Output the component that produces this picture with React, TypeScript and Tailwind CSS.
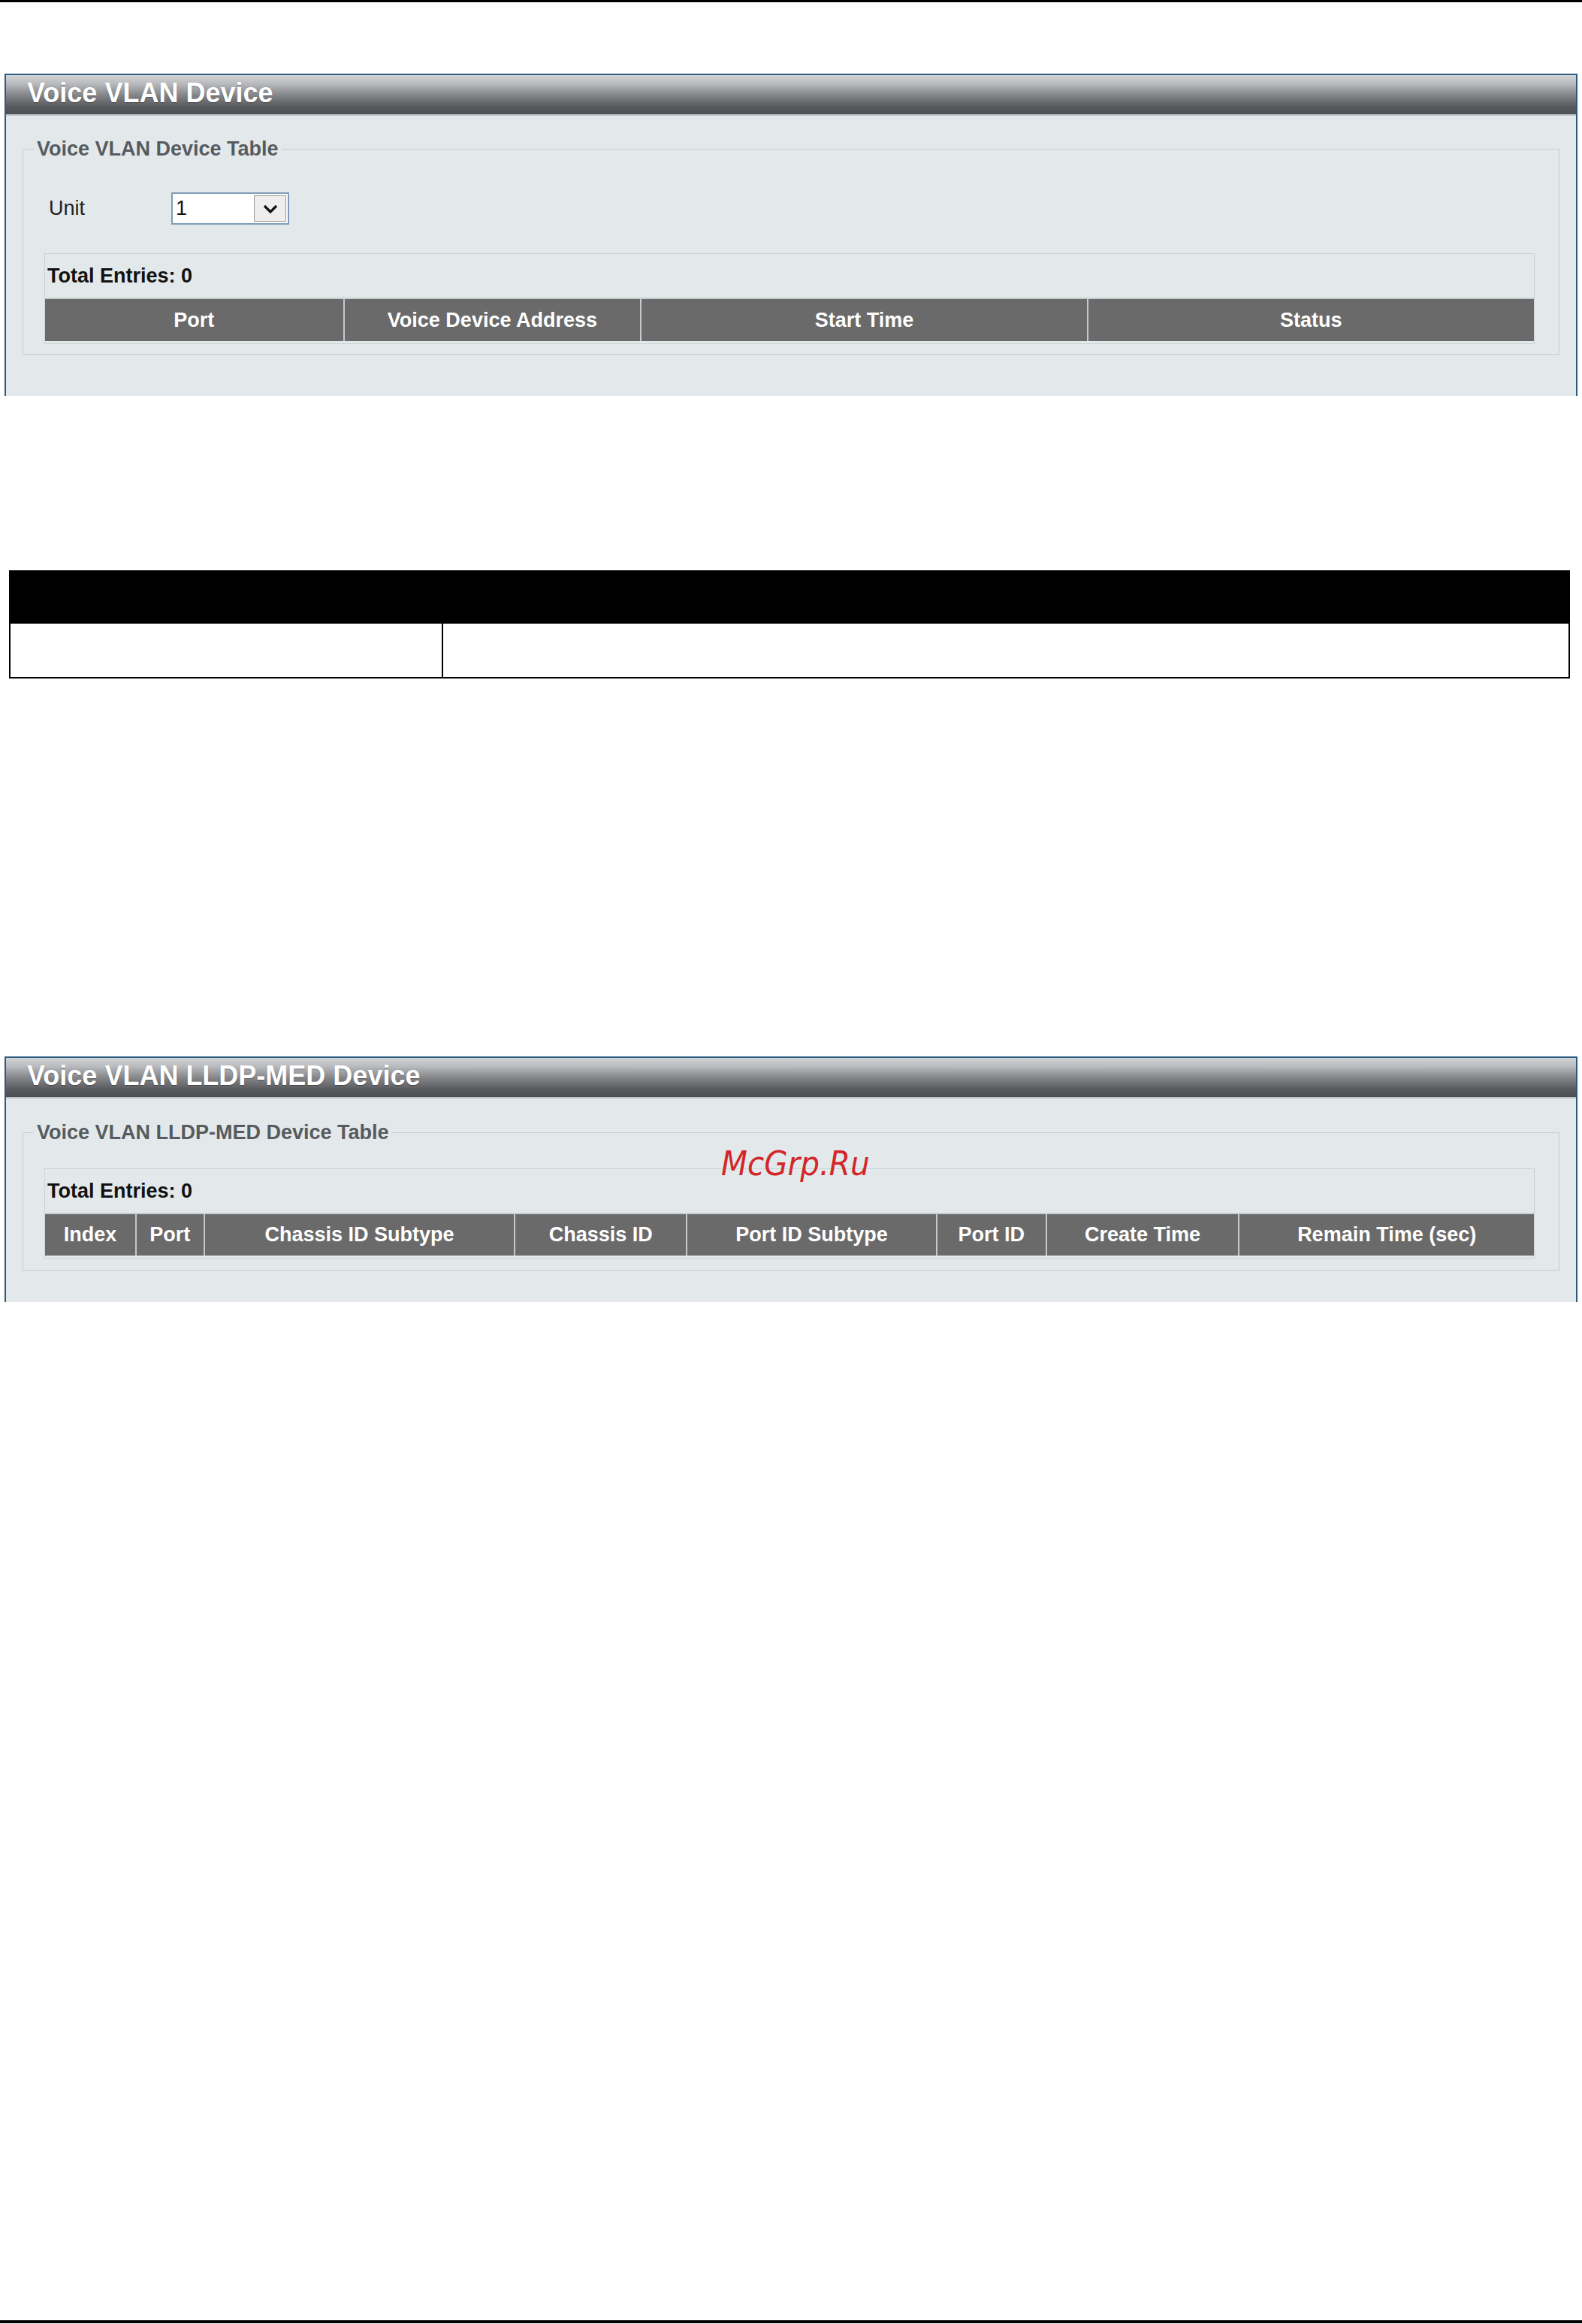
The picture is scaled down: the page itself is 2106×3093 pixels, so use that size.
import React from "react"

const FONT = { fontFamily: '"Liberation Sans", Arial, sans-serif' }

const DEVICE_COLS = [
  { label: "Port", w: 397 },
  { label: "Voice Device Address", w: 396 },
  { label: "Start Time", w: 595 },
  { label: "Status", w: 596 },
]

const LLDP_COLS = [
  { label: "Index", w: 120 },
  { label: "Port", w: 91 },
  { label: "Chassis ID Subtype", w: 414 },
  { label: "Chassis ID", w: 229 },
  { label: "Port ID Subtype", w: 333 },
  { label: "Port ID", w: 146 },
  { label: "Create Time", w: 257 },
  { label: "Remain Time (sec)", w: 394 },
]

function PanelHeader({ title }: { title: string }) {
  return (
    <div className="h-[54px] flex items-center pl-[28px] pb-[5px] border-b-2 border-[#b9c2c3] bg-[linear-gradient(to_bottom,#d3d4d6_0%,#b9babd_22%,#838488_52%,#5a5b5e_80%,#4d4e51_100%)]">
      <span className="text-[36px] font-bold text-white leading-none [text-shadow:0_1px_1px_rgba(0,0,0,0.35)]">
        {title}
      </span>
    </div>
  )
}

function EntriesTable({ cols, headH }: { cols: { label: string; w: number }[]; headH: string }) {
  return (
    <div className="w-[1984px] border border-[#cbd2d3] pb-[3px]">
      <div className="h-[58px] flex items-center pl-[3px] text-[27px] font-bold text-[#111]">
        Total Entries: 0
      </div>
      <div className={`flex ${headH} bg-[#6a6a6a] border-t-2 border-[#c9cfd0]`}>
        {cols.map((c, i) => (
          <div
            key={c.label}
            style={{ width: c.w }}
            className={`flex items-center justify-center text-[27px] font-bold text-white ${i > 0 ? "border-l-2 border-[#c3c9ca]" : ""}`}
          >
            {c.label}
          </div>
        ))}
      </div>
    </div>
  )
}

export default function App() {
  return (
    <div style={FONT} className="relative w-[2106px] h-[3093px] bg-white flex flex-col">
      <div className="h-[3px] bg-black" />

      {/* Voice VLAN Device */}
      <section className="mt-[95px] ml-[6px] w-[2094px] h-[429px] flex flex-col border-t-2 border-x-2 border-[#2d5c83]">
        <PanelHeader title="Voice VLAN Device" />
        <div className="flex-1 bg-[#e3e9ea] px-[22px] pt-[28px]">
          <fieldset className="border border-[#c4cccd] pl-[28px] pb-[13px]">
            <legend className="-ml-[14px] px-[4px] text-[27px] font-bold text-[#565b60] leading-[32px]">
              Voice VLAN Device Table
            </legend>
            <div className="mt-[42px] flex items-center">
              <span className="w-[169px] pl-[6px] text-[27px] text-[#222]">Unit</span>
              <div className="w-[157px] h-[43px] flex items-center justify-between bg-white border-2 border-[#7f9cb8] pl-[4px] pr-[2px]">
                <span className="text-[27px] text-[#111] leading-none">1</span>
                <div className="w-[43px] h-[35px] flex items-center justify-center bg-[#eeeeee] border border-[#9a9a9a]">
                  <svg width="20" height="12" viewBox="0 0 20 12">
                    <polyline points="2,2 10,10 18,2" fill="none" stroke="#111" strokeWidth="3.2" />
                  </svg>
                </div>
              </div>
            </div>
            <div className="mt-[38px]">
              <EntriesTable cols={DEVICE_COLS} headH="h-[58px]" />
            </div>
          </fieldset>
        </div>
      </section>

      {/* black description table */}
      <div className="mt-[232px] ml-[12px] w-[2078px]">
        <div className="h-[71px] bg-black" />
        <div className="h-[73px] flex border-2 border-t-0 border-black">
          <div className="w-[576px] border-r-2 border-black" />
          <div className="flex-1" />
        </div>
      </div>

      {/* Voice VLAN LLDP-MED Device */}
      <section className="mt-[503px] ml-[6px] w-[2094px] h-[327px] flex flex-col border-t-2 border-x-2 border-[#2d5c83]">
        <PanelHeader title="Voice VLAN LLDP-MED Device" />
        <div className="flex-1 bg-[#e3e9ea] px-[22px] pt-[29px]">
          <fieldset className="border border-[#c4cccd] pl-[28px] pb-[15px]">
            <legend className="-ml-[14px] px-[4px] text-[27px] font-bold text-[#565b60] leading-[32px]">
              Voice VLAN LLDP-MED Device Table
            </legend>
            <div className="mt-[32px]">
              <EntriesTable cols={LLDP_COLS} headH="h-[57px]" />
            </div>
          </fieldset>
        </div>
      </section>

      <div className="flex-1" />
      <div className="h-[4px] mb-[1px] bg-black" />

      <span
        style={{ fontFamily: '"DejaVu Sans Condensed", "DejaVu Sans", sans-serif' }}
        className="absolute left-[960px] top-[1526px] text-[45px] italic leading-none text-[#d3262b]"
      >
        McGrp.Ru
      </span>
    </div>
  )
}
